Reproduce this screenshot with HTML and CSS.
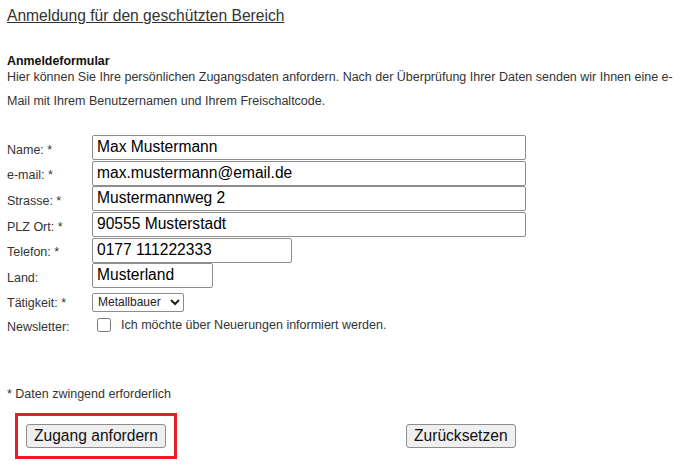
FILE: index.html
```html
<!DOCTYPE html>
<html lang="de">
<head>
    <meta charset="UTF-8">
    <meta name="viewport" content="width=device-width, initial-scale=1.0">
    <title>Anmeldung für den geschützten Bereich</title>
    <link rel="stylesheet" href="styles.css">
</head>
<body>
    <h1 class="page-title">Anmeldung für den geschützten Bereich</h1>

    <h2 class="form-title">Anmeldeformular</h2>
    <p class="intro">Hier können Sie Ihre persönlichen Zugangsdaten anfordern. Nach der Überprüfung Ihrer Daten senden wir Ihnen eine e-Mail mit Ihrem Benutzernamen und Ihrem Freischaltcode.</p>

    <form id="access-form" class="access-form">
        <div class="row">
            <label for="name">Name: *</label>
            <input type="text" id="name" name="name" class="field-long" value="Max Mustermann">
        </div>
        <div class="row">
            <label for="email">e-mail: *</label>
            <input type="text" id="email" name="email" class="field-long" value="max.mustermann@email.de">
        </div>
        <div class="row">
            <label for="strasse">Strasse: *</label>
            <input type="text" id="strasse" name="strasse" class="field-long" value="Mustermannweg 2">
        </div>
        <div class="row">
            <label for="ort">PLZ Ort: *</label>
            <input type="text" id="ort" name="ort" class="field-long" value="90555 Musterstadt">
        </div>
        <div class="row">
            <label for="telefon">Telefon: *</label>
            <input type="text" id="telefon" name="telefon" class="field-mid" value="0177 111222333">
        </div>
        <div class="row">
            <label for="land">Land:</label>
            <input type="text" id="land" name="land" class="field-short" value="Musterland">
        </div>
        <div class="row row-small">
            <label for="taetigkeit">Tätigkeit: *</label>
            <select id="taetigkeit" name="taetigkeit" class="select">
                <option>Metallbauer</option>
            </select>
        </div>
        <div class="row row-small">
            <label for="newsletter">Newsletter:</label>
            <span class="check">
                <input type="checkbox" id="newsletter" name="newsletter">
                <span>Ich möchte über Neuerungen informiert werden.</span>
            </span>
        </div>

        <p class="note">* Daten zwingend erforderlich</p>

        <div class="actions">
            <span class="highlight"><button type="submit">Zugang anfordern</button></span>
            <button type="reset" class="reset">Zurücksetzen</button>
        </div>
    </form>
</body>
</html>
```

FILE: styles.css
```css
body { margin: 0; padding: 0 0 0 7px; font-family: "Liberation Sans", Arial, sans-serif; color: #333; background: #fff; }
.page-title { margin: 7px 0 0; font-size: 15.6px; font-weight: normal; line-height: 18px; text-decoration: underline; }
.form-title { margin: 29px 0 0; font-size: 12.4px; font-weight: bold; color: #111; line-height: 14px; }
.intro { margin: -3px 0 0; font-size: 12.5px; line-height: 24px; }

.access-form { margin-top: 22px; }
.row { display: flex; align-items: center; height: 25.6px; }
.row label { width: 85px; flex: none; font-size: 12.5px; padding-top: 4px; }
.row input[type=text] { box-sizing: border-box; height: 25px; margin: 0; padding: 1px 4px 2px; font-family: "Liberation Sans", Arial, sans-serif; font-size: 15.6px; color: #000; border: 1px solid #8d8d8d; border-radius: 2px; }
.field-long { width: 434px; }
.field-mid { width: 200px; }
.field-short { width: 121px; }
.row-small { height: 24px; }
.select { height: 19px; width: 92px; margin: 3px 0 0; font-family: "Liberation Sans", Arial, sans-serif; font-size: 12px; color: #222; border: 1px solid #8d8d8d; border-radius: 2px; background: #fff; padding: 0 1px; }
.check { display: flex; align-items: center; font-size: 12.5px; padding-top: 1px; }
.check input { width: 14px; height: 14px; margin: 0 10px 0 5px; }

.note { margin: 50px 0 0; font-size: 12.5px; }
.actions { display: flex; align-items: center; margin-top: 12px; }
.highlight { display: inline-block; margin-left: 8px; padding: 8px 8px; border: 3px solid #ed1c24; }
button { height: 24px; padding: 0 7px; font-family: "Liberation Sans", Arial, sans-serif; font-size: 15.6px; color: #111; background: #efefef; border: 1px solid #8d8d8d; border-radius: 3px; }
.reset { margin-left: 229px; }
```
